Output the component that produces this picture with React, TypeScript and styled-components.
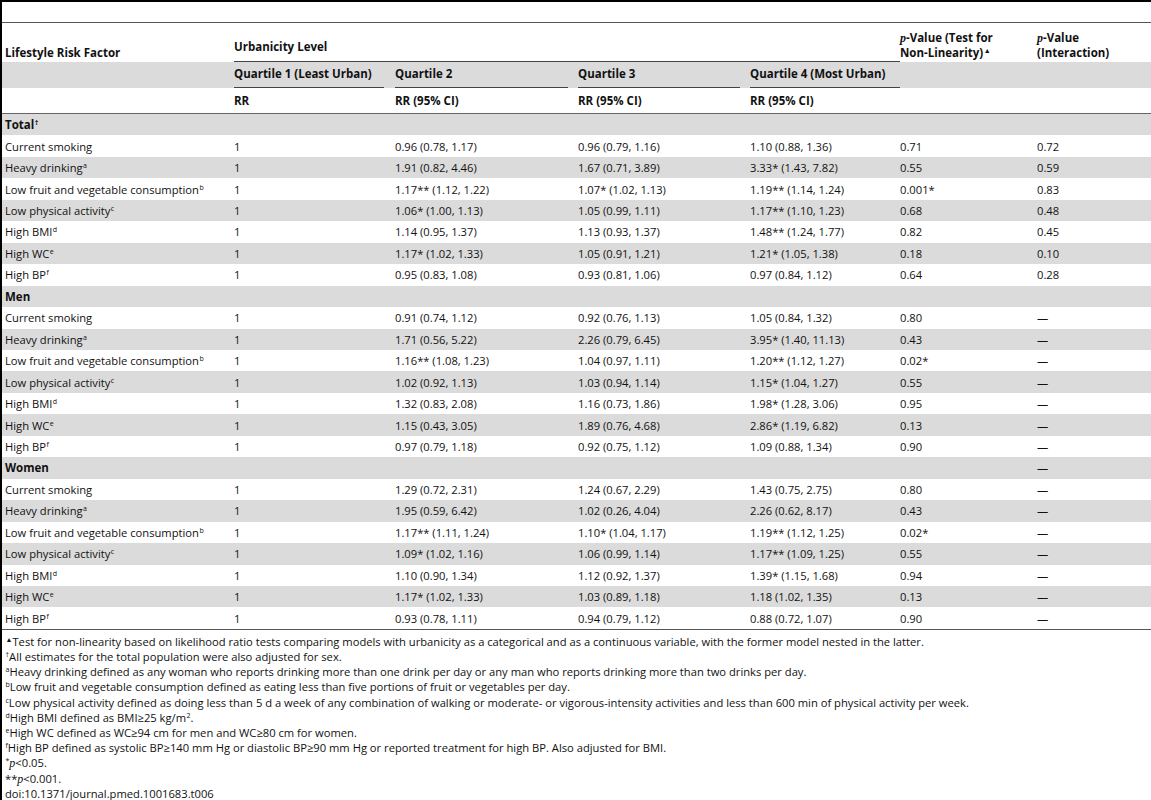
import React from "react";
import styled, { createGlobalStyle } from "styled-components";

const Global = createGlobalStyle`
  html, body { margin: 0; padding: 0; background: #fff; }
  body { font-family: "Open Sans", "Liberation Sans", sans-serif; color: #111; }
`;

const COLS = "232px 161px 183px 172px 150px 137px 1fr";

const Page = styled.div`
  box-sizing: border-box;
  width: 1151px;
  height: 800px;
  overflow: hidden;
  border-top: 2px solid #000;
  border-left: 2px solid #000;
  padding-top: 20px;
  font-size: 11.2px;
  line-height: 15px;
`;

const Table = styled.div`
  border-top: 1px solid #555;
  border-bottom: 1px solid #555;
`;

const Row = styled.div<{ $shade?: boolean; $h: number; $align?: string; $rule?: boolean }>`
  display: grid;
  grid-template-columns: ${COLS};
  height: ${(p) => p.$h}px;
  align-items: ${(p) => p.$align || "center"};
  background: ${(p) => (p.$shade ? "#dbdbdb" : "#fff")};
  ${(p) => (p.$rule ? "border-bottom: 1px solid #666;" : "")}
`;

const Cell = styled.div<{ $first?: boolean; $bold?: boolean; $span?: number; $pb?: number }>`
  padding-left: ${(p) => (p.$first ? "3px" : "0")};
  font-weight: ${(p) => (p.$bold ? 700 : 400)};
  font-size: ${(p) => (p.$bold ? "11.5px" : "inherit")};
  white-space: nowrap;
  ${(p) => (p.$span ? `grid-column: span ${p.$span};` : "")}
  ${(p) => (p.$pb !== undefined ? `padding-bottom: ${p.$pb}px;` : "")}
`;

const Ruled = styled.div<{ $gap: number; $pb: number }>`
  border-bottom: 1px solid #444;
  margin-right: ${(p) => p.$gap}px;
  padding-bottom: ${(p) => p.$pb}px;
  font-weight: 700;
  font-size: 11.5px;
  white-space: nowrap;
`;

const Sup = styled.sup`
  font-size: 7px;
  line-height: 0;
  vertical-align: 4px;
  margin-left: 0.5px;
`;

const It = styled.i`
  font-style: italic;
  font-family: "Liberation Serif", serif;
  font-size: 12px;
  line-height: 0;
`;

const Notes = styled.div`
  padding-top: 4px;
  padding-left: 3px;
  font-size: 11.2px;
  line-height: 15px;
`;

const Note = styled.div`
  height: 15.2px;
  white-space: nowrap;
`;

const factors = [
  ["Current smoking", ""],
  ["Heavy drinking", "a"],
  ["Low fruit and vegetable consumption", "b"],
  ["Low physical activity", "c"],
  ["High BMI", "d"],
  ["High WC", "e"],
  ["High BP", "f"],
];

const totalVals = [
  ["0.96 (0.78, 1.17)", "0.96 (0.79, 1.16)", "1.10 (0.88, 1.36)", "0.71", "0.72"],
  ["1.91 (0.82, 4.46)", "1.67 (0.71, 3.89)", "3.33* (1.43, 7.82)", "0.55", "0.59"],
  ["1.17** (1.12, 1.22)", "1.07* (1.02, 1.13)", "1.19** (1.14, 1.24)", "0.001*", "0.83"],
  ["1.06* (1.00, 1.13)", "1.05 (0.99, 1.11)", "1.17** (1.10, 1.23)", "0.68", "0.48"],
  ["1.14 (0.95, 1.37)", "1.13 (0.93, 1.37)", "1.48** (1.24, 1.77)", "0.82", "0.45"],
  ["1.17* (1.02, 1.33)", "1.05 (0.91, 1.21)", "1.21* (1.05, 1.38)", "0.18", "0.10"],
  ["0.95 (0.83, 1.08)", "0.93 (0.81, 1.06)", "0.97 (0.84, 1.12)", "0.64", "0.28"],
];

const menVals = [
  ["0.91 (0.74, 1.12)", "0.92 (0.76, 1.13)", "1.05 (0.84, 1.32)", "0.80", "—"],
  ["1.71 (0.56, 5.22)", "2.26 (0.79, 6.45)", "3.95* (1.40, 11.13)", "0.43", "—"],
  ["1.16** (1.08, 1.23)", "1.04 (0.97, 1.11)", "1.20** (1.12, 1.27)", "0.02*", "—"],
  ["1.02 (0.92, 1.13)", "1.03 (0.94, 1.14)", "1.15* (1.04, 1.27)", "0.55", "—"],
  ["1.32 (0.83, 2.08)", "1.16 (0.73, 1.86)", "1.98* (1.28, 3.06)", "0.95", "—"],
  ["1.15 (0.43, 3.05)", "1.89 (0.76, 4.68)", "2.86* (1.19, 6.82)", "0.13", "—"],
  ["0.97 (0.79, 1.18)", "0.92 (0.75, 1.12)", "1.09 (0.88, 1.34)", "0.90", "—"],
];

const womenVals = [
  ["1.29 (0.72, 2.31)", "1.24 (0.67, 2.29)", "1.43 (0.75, 2.75)", "0.80", "—"],
  ["1.95 (0.59, 6.42)", "1.02 (0.26, 4.04)", "2.26 (0.62, 8.17)", "0.43", "—"],
  ["1.17** (1.11, 1.24)", "1.10* (1.04, 1.17)", "1.19** (1.12, 1.25)", "0.02*", "—"],
  ["1.09* (1.02, 1.16)", "1.06 (0.99, 1.14)", "1.17** (1.09, 1.25)", "0.55", "—"],
  ["1.10 (0.90, 1.34)", "1.12 (0.92, 1.37)", "1.39* (1.15, 1.68)", "0.94", "—"],
  ["1.17* (1.02, 1.33)", "1.03 (0.89, 1.18)", "1.18 (1.02, 1.35)", "0.13", "—"],
  ["0.93 (0.78, 1.11)", "0.94 (0.79, 1.12)", "0.88 (0.72, 1.07)", "0.90", "—"],
];

type Section = { title: string; sup?: string; last?: string; vals: string[][] };

const sections: Section[] = [
  { title: "Total", sup: "†", vals: totalVals },
  { title: "Men", vals: menVals },
  { title: "Women", last: "—", vals: womenVals },
];

const BODY_H = 21.46;

function Body() {
  const rows: React.ReactNode[] = [];
  let i = 0;
  sections.forEach((s) => {
    rows.push(
      <Row key={`s${i}`} $h={BODY_H} $shade={i % 2 === 0}>
        <Cell $first $bold>
          {s.title}
          {s.sup && <Sup>{s.sup}</Sup>}
        </Cell>
        <Cell />
        <Cell />
        <Cell />
        <Cell />
        <Cell />
        <Cell>{s.last || ""}</Cell>
      </Row>
    );
    i++;
    s.vals.forEach((v, k) => {
      const [label, sup] = factors[k];
      rows.push(
        <Row key={`r${i}`} $h={BODY_H} $shade={i % 2 === 0}>
          <Cell $first>
            {label}
            {sup && <Sup>{sup}</Sup>}
          </Cell>
          <Cell>1</Cell>
          {v.map((x, j) => (
            <Cell key={j}>{x}</Cell>
          ))}
        </Row>
      );
      i++;
    });
  });
  return <>{rows}</>;
}

export default function App() {
  return (
    <>
      <Global />
      <Page>
        <Table>
          <Row $h={39} $align="end">
            <Cell $first $bold $pb={2}>
              Lifestyle Risk Factor
            </Cell>
            <Cell $span={4}>
              <Ruled $gap={0} $pb={7}>
                Urbanicity Level
              </Ruled>
            </Cell>
            <Cell $bold $pb={2}>
              <It>p</It>-Value (Test for
              <br />
              Non-Linearity)<Sup>▲</Sup>
            </Cell>
            <Cell $bold $pb={2}>
              <It>p</It>-Value
              <br />
              (Interaction)
            </Cell>
          </Row>
          <Row $h={26} $align="end" $shade>
            <Cell $first />
            <Cell>
              <Ruled $gap={11} $pb={6}>
                Quartile 1 (Least Urban)
              </Ruled>
            </Cell>
            <Cell>
              <Ruled $gap={10} $pb={6}>
                Quartile 2
              </Ruled>
            </Cell>
            <Cell>
              <Ruled $gap={10} $pb={6}>
                Quartile 3
              </Ruled>
            </Cell>
            <Cell>
              <Ruled $gap={0} $pb={6}>
                Quartile 4 (Most Urban)
              </Ruled>
            </Cell>
            <Cell />
            <Cell />
          </Row>
          <Row $h={25} $rule>
            <Cell $first />
            <Cell $bold>RR</Cell>
            <Cell $bold>RR (95% CI)</Cell>
            <Cell $bold>RR (95% CI)</Cell>
            <Cell $bold>RR (95% CI)</Cell>
            <Cell />
            <Cell />
          </Row>
          <Body />
        </Table>
        <Notes>
          <Note>
            <Sup>▲</Sup>Test for non-linearity based on likelihood ratio tests comparing models with urbanicity as a categorical and as a continuous variable, with the former model nested in the latter.
          </Note>
          <Note>
            <Sup>†</Sup>All estimates for the total population were also adjusted for sex.
          </Note>
          <Note>
            <Sup>a</Sup>Heavy drinking defined as any woman who reports drinking more than one drink per day or any man who reports drinking more than two drinks per day.
          </Note>
          <Note>
            <Sup>b</Sup>Low fruit and vegetable consumption defined as eating less than five portions of fruit or vegetables per day.
          </Note>
          <Note>
            <Sup>c</Sup>Low physical activity defined as doing less than 5 d a week of any combination of walking or moderate- or vigorous-intensity activities and less than 600 min of physical activity per week.
          </Note>
          <Note>
            <Sup>d</Sup>High BMI defined as BMI≥25 kg/m<Sup>2</Sup>.
          </Note>
          <Note>
            <Sup>e</Sup>High WC defined as WC≥94 cm for men and WC≥80 cm for women.
          </Note>
          <Note>
            <Sup>f</Sup>High BP defined as systolic BP≥140 mm Hg or diastolic BP≥90 mm Hg or reported treatment for high BP. Also adjusted for BMI.
          </Note>
          <Note>
            <Sup>*</Sup>
            <It>p</It>&lt;0.05.
          </Note>
          <Note>
            **<It>p</It>&lt;0.001.
          </Note>
          <Note>doi:10.1371/journal.pmed.1001683.t006</Note>
        </Notes>
      </Page>
    </>
  );
}
